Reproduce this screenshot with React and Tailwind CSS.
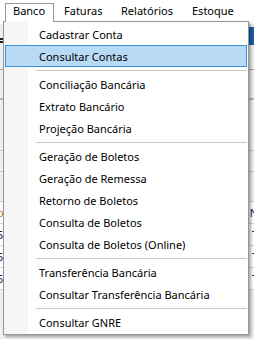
const topMenu = [
    { label: "Banco", w: "w-[49px]", pl: "pl-[7px]", open: true },
    { label: "Faturas", w: "w-[57px]", pl: "pl-[9px]" },
    { label: "Relatórios", w: "w-[71px]", pl: "pl-[9px]" },
    { label: "Estoque", w: "w-[60px]", pl: "pl-[9px]" },
];

const groups = [
    ["Cadastrar Conta", "Consultar Contas"],
    ["Conciliação Bancária", "Extrato Bancário", "Projeção Bancária"],
    [
        "Geração de Boletos",
        "Geração de Remessa",
        "Retorno de Boletos",
        "Consulta de Boletos",
        "Consulta de Boletos (Online)",
    ],
    ["Transferência Bancária", "Consultar Transferência Bancária"],
    ["Consultar GNRE"],
];

const hovered = "Consultar Contas";

// rows of the grid that sits behind the menu (only the edges show)
const gridRows = [
    { l: "o", r: "N", lc: "text-[#c08000]" },
    { l: "5", r: "T" },
    { l: "5", r: "T" },
    { l: "5", r: "T" },
];

const MenuItem = ({ label }) => {
    const active = label === hovered;
    return (
        <div
            className={
                active
                    ? "h-[22px] mx-[1px] flex items-center pl-[33px] pt-[1px] border border-[#3d8fdc] bg-[#b9daf5]"
                    : "h-[22px] mx-[1px] flex items-center pl-[33px] pt-[1px] border border-transparent"
            }
        >
            <span className="text-[11px] leading-[16px] text-black whitespace-nowrap">{label}</span>
        </div>
    );
};

const Separator = () => (
    <div className="h-[6px] flex items-center pl-[32px] pr-[1px]">
        <div className="h-px w-full bg-[#c8c8c8]" />
    </div>
);

export default function App() {
    return (
        <div className="relative w-[254px] h-[339px] overflow-hidden bg-[#f0f0f0] font-['Noto_Sans',sans-serif] select-none">
            {/* menu bar */}
            <div className="h-[24px] bg-white flex items-start pl-[5px] pt-[3px]">
                {topMenu.map((m) => (
                    <div
                        key={m.label}
                        className={
                            m.open
                                ? `${m.w} ${m.pl} h-[19px] relative z-20 bg-white border border-b-0 border-[#999999]`
                                : `${m.w} ${m.pl} h-[19px] border border-b-0 border-transparent`
                        }
                    >
                        <span className="block text-[11px] leading-[14px] text-black whitespace-nowrap">{m.label}</span>
                    </div>
                ))}
            </div>

            {/* toolbar strip behind the menu */}
            <div className="h-[21px] flex justify-between items-end bg-[#f0f0f0]">
                <div className="w-[3px] h-[5px] mb-[2px] border-y-2 border-[#222]" />
                <div className="w-[40px] h-[18px] bg-[#1a5fb0]" />
            </div>

            {/* form body behind the menu */}
            <div className="h-[25px] border-b border-[#a8a8a8]" />
            <div className="h-[30px] border-b-2 border-[#b8b8b8]" />
            <div className="h-[51px] border-b border-[#c8c8c8]" />
            <div className="h-[21px] border-b border-[#c8c8c8]" />
            <div className="h-[30px] border-b border-[#d0d0d0]" />

            {/* data grid behind the menu */}
            <div className="flex flex-col bg-white">
                {gridRows.map((r, i) => (
                    <div
                        key={i}
                        className="h-[22px] flex justify-between items-center border-b border-[#d8d8d8] text-[11px] leading-[16px]"
                    >
                        <span className={`-ml-[3px] ${r.lc || "text-[#1a1a60]"}`}>{r.l}</span>
                        <span className="mr-[-4px] text-[#1a1a60]">{r.r}</span>
                    </div>
                ))}
            </div>

            {/* dropdown */}
            <div className="absolute left-[3px] top-[21px] w-[246px] z-10 border border-[#979797] bg-[linear-gradient(to_right,#f6f6f6_24px,#ffffff_24px)] py-[1px] shadow-[2px_2px_3px_rgba(0,0,0,0.35)]">
                {groups.map((g, gi) => (
                    <div key={gi}>
                        {gi > 0 && <Separator />}
                        {g.map((label) => (
                            <MenuItem key={label} label={label} />
                        ))}
                    </div>
                ))}
            </div>
        </div>
    );
}
